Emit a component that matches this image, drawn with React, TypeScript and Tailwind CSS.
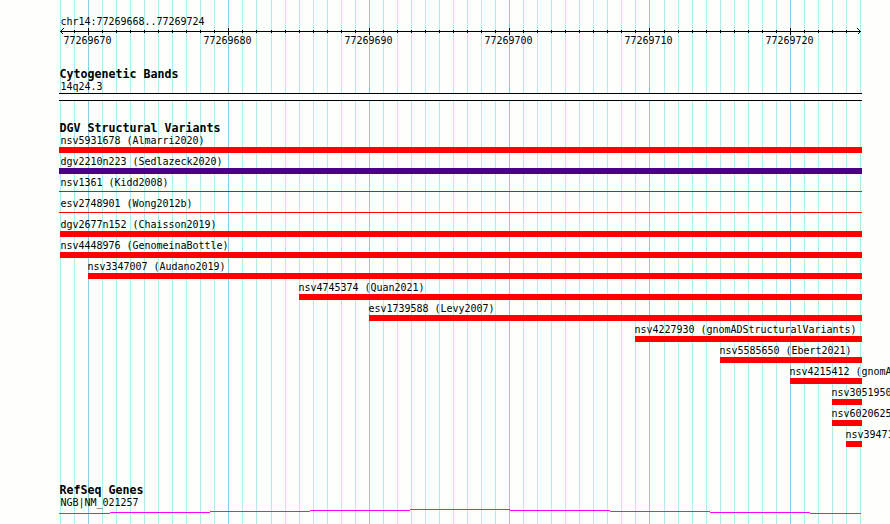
import React from "react";

interface Feature {
  name: string;
  x: number;
  labelX: number;
  kind: "bar" | "line";
  color: string;
}

const RIGHT_EDGE = 862;

// One grid line per base, every tenth base is a major line
const gridLines = Array.from({ length: 58 }, (_, i) => ({
  x: 60 + i * 14 + (i >= 15 ? 1 : 0) + (i >= 43 ? 1 : 0),
  major: i % 10 === 2,
  position: 77269668 + i,
}));

const features: Feature[] = [
  { name: "nsv5931678 (Almarri2020)", x: 59, labelX: 60.5, kind: "bar", color: "bg-[#ff0000]" },
  { name: "dgv2210n223 (Sedlazeck2020)", x: 59, labelX: 60.5, kind: "bar", color: "bg-[#4b0082]" },
  { name: "nsv1361 (Kidd2008)", x: 59, labelX: 60.5, kind: "line", color: "bg-[#ff0000]" },
  { name: "esv2748901 (Wong2012b)", x: 59, labelX: 60.5, kind: "line", color: "bg-[#ff0000]" },
  { name: "dgv2677n152 (Chaisson2019)", x: 60, labelX: 60.5, kind: "bar", color: "bg-[#ff0000]" },
  { name: "nsv4448976 (GenomeinaBottle)", x: 60, labelX: 60.5, kind: "bar", color: "bg-[#ff0000]" },
  { name: "nsv3347007 (Audano2019)", x: 88, labelX: 87.5, kind: "bar", color: "bg-[#ff0000]" },
  { name: "nsv4745374 (Quan2021)", x: 299, labelX: 298.5, kind: "bar", color: "bg-[#ff0000]" },
  { name: "esv1739588 (Levy2007)", x: 369, labelX: 368.5, kind: "bar", color: "bg-[#ff0000]" },
  { name: "nsv4227930 (gnomADStructuralVariants)", x: 635, labelX: 634.5, kind: "bar", color: "bg-[#ff0000]" },
  { name: "nsv5585650 (Ebert2021)", x: 720, labelX: 719.5, kind: "bar", color: "bg-[#ff0000]" },
  { name: "nsv4215412 (gnomA", x: 790, labelX: 789.5, kind: "bar", color: "bg-[#ff0000]" },
  { name: "nsv3051950", x: 832, labelX: 831.5, kind: "bar", color: "bg-[#ff0000]" },
  { name: "nsv6020625", x: 832, labelX: 831.5, kind: "bar", color: "bg-[#ff0000]" },
  { name: "nsv39471", x: 846, labelX: 845.5, kind: "bar", color: "bg-[#ff0000]" },
];

const geneSteps = [
  { x: 59, width: 51, y: 4 },
  { x: 110, width: 100, y: 3 },
  { x: 210, width: 100, y: 2 },
  { x: 310, width: 100, y: 1 },
  { x: 410, width: 100, y: 0 },
  { x: 510, width: 100, y: 1 },
  { x: 610, width: 100, y: 2 },
  { x: 710, width: 100, y: 3 },
  { x: 810, width: 51, y: 4 },
];

function GridLines() {
  return (
    <svg className="absolute inset-0 -z-10" width="890" height="524" shapeRendering="crispEdges">
      {gridLines.map((line) => (
        <rect key={line.x} x={line.x} y="0" width="1" height="524" fill={line.major ? "#87ceeb" : "#afeeee"} />
      ))}
    </svg>
  );
}

function Ruler() {
  return (
    <svg className="block" width="890" height="19" shapeRendering="crispEdges">
      <rect x="60" y="3" width="801" height="1" fill="#000" />
      {gridLines.slice(1, -1).map((line) => (
        <rect
          key={line.x}
          x={line.x}
          y={line.major ? 0 : 2}
          width="1"
          height={line.major ? 7 : 3}
          fill="#000"
        />
      ))}
      {/* Arrow heads */}
      <path d="M63.5 0.5L60.5 3.5L63.5 6.5M857.5 0.5L860.5 3.5L857.5 6.5" fill="none" stroke="#000" />
      {gridLines.filter((line) => line.major).map((line) => (
        <text key={line.position} x={line.x - 24.5} y="16" fontSize="10" letterSpacing="-0.02">
          {line.position}
        </text>
      ))}
    </svg>
  );
}

function TrackTitle({ children }: { children: React.ReactNode }) {
  return (
    <h2 className="h-[13px] pt-px pl-[59.5px] text-[11.63px] leading-[13px] font-bold tracking-normal whitespace-pre">
      {children}
    </h2>
  );
}

function FeatureRow({ feature }: { feature: Feature }) {
  return (
    <div className="flex h-[21px] flex-col">
      <span className="h-[13px] leading-[13px] whitespace-pre" style={{ marginLeft: feature.labelX }}>
        {feature.name}
      </span>
      <div
        className={`${feature.kind === "bar" ? "h-[6px]" : "mt-[2px] h-px"} ${feature.color}`}
        style={{ marginLeft: feature.x, width: RIGHT_EDGE - feature.x }}
      />
    </div>
  );
}

export default function App() {
  return (
    <main className="relative isolate h-[524px] w-[890px] overflow-hidden bg-[#fdfffc] pt-[15px] font-['DejaVu_Sans_Mono',monospace] text-[10px] tracking-[-0.02px] text-black">
      <GridLines />

      <div className="h-[13px] pl-[60.5px] leading-[13px]">chr14:77269668..77269724</div>
      <Ruler />

      {/* Cytogenetic bands */}
      <section className="mt-[20px]">
        <TrackTitle>Cytogenetic Bands</TrackTitle>
        <div className="h-[13px] pl-[60.5px] leading-[13px]">14q24.3</div>
        <div className="ml-[59px] h-[8px] w-[803px] border-y border-black bg-white" />
      </section>

      {/* Structural variants */}
      <section className="mt-[20px]">
        <TrackTitle>DGV Structural Variants</TrackTitle>
        {features.map((feature) => (
          <FeatureRow key={feature.name} feature={feature} />
        ))}
      </section>

      {/* Genes */}
      <section className="mt-[34px]">
        <TrackTitle>RefSeq Genes</TrackTitle>
        <div className="h-[13px] pl-[60.5px] leading-[13px]">NGB|NM_021257</div>
        <svg className="block" width="890" height="5" shapeRendering="crispEdges">
          {geneSteps.map((step) => (
            <rect key={step.x} x={step.x} y={step.y} width={step.width} height="1" fill="#ff00ff" />
          ))}
        </svg>
      </section>
    </main>
  );
}
